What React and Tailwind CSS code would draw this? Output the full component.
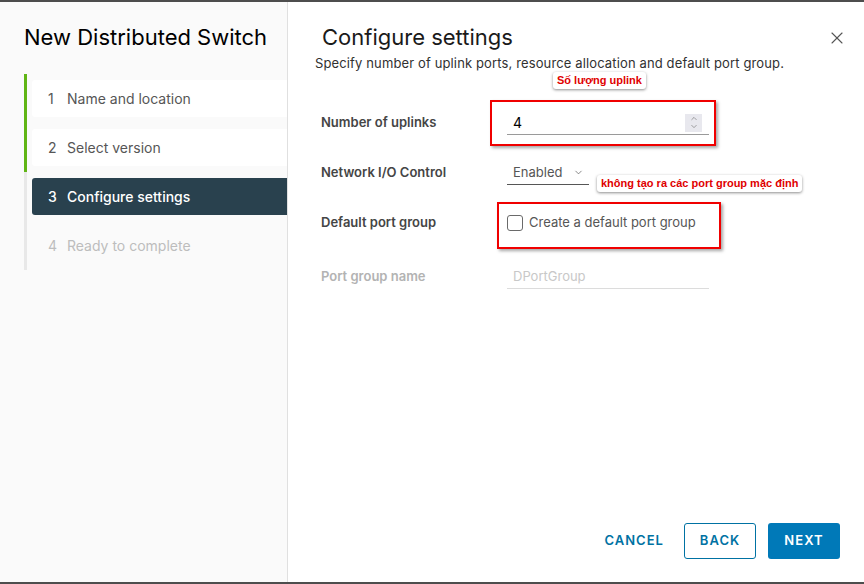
import { ChevronDown, ChevronUp, X } from "lucide-react";

const steps = [
  { n: 1, label: "Name and location", state: "done" },
  { n: 2, label: "Select version", state: "done" },
  { n: 3, label: "Configure settings", state: "active" },
  { n: 4, label: "Ready to complete", state: "todo" },
];

function Step({ step }) {
  const bar = step.state === "done" ? "border-[#60b515]" : "border-[#e8e8e8]";
  const box =
    step.state === "active"
      ? "bg-[#29414e] text-white font-medium"
      : step.state === "done"
      ? "bg-white text-[#565656]"
      : "text-[#bdbdbd]";
  return (
    <div className={`h-[49px] border-l-[3px] ${bar} pl-[5px] py-[6px]`}>
      <div className={`h-[37px] flex items-center pl-4 rounded-l-[3px] text-[14px] ${box}`}>
        <span className="w-[19px]">{step.n}</span>
        <span>{step.label}</span>
      </div>
    </div>
  );
}

function Note({ children, className }) {
  return (
    <div
      className={`absolute px-1 h-[17px] flex items-center rounded-[3px] bg-white text-[11px] font-bold text-[#e00000] shadow-[0_1px_3px_rgba(0,0,0,0.45)] ${className}`}
      style={{ fontFamily: '"Liberation Sans", Arial, sans-serif', textShadow: "0 0 2px #fff" }}
    >
      {children}
    </div>
  );
}

export default function App() {
  return (
    <div
      className="w-[864px] h-[584px] flex border-t-2 border-b-2 border-[#4d4d4d] bg-white text-[#333]"
      style={{ fontFamily: 'Inter, "Liberation Sans", Arial, sans-serif' }}
    >
      <aside className="w-[288px] shrink-0 bg-[#fafafa] border-r border-[#e0e0e0] pl-6">
        <h1 className="text-[22px] leading-[28px] text-black mt-[21px]">New Distributed Switch</h1>
        <div className="mt-[23px]">
          {steps.map((s) => (
            <Step key={s.n} step={s} />
          ))}
        </div>
      </aside>

      <main className="relative flex-1 flex flex-col">
        <div className="flex items-start justify-between pl-[34px] pr-[17px] pt-[21px]">
          <h2 className="text-[22px] leading-[28px] text-[#1a1a1a]">Configure settings</h2>
          <X className="w-[20px] h-[20px] mt-[5px] text-[#555]" strokeWidth={1.3} />
        </div>
        <p className="pl-[27px] mt-[3px] text-[13px] leading-[18px] tracking-[0.01em] text-[#313131]">
          Specify number of uplink ports, resource allocation and default port group.
        </p>

        <div className="pl-[33px] mt-[26px] text-[13px]">
          <div className="flex items-center h-[50px]">
            <label className="w-[186px] font-semibold text-[#454545]">Number of uplinks</label>
            <div className="w-[202px] h-[24px] flex items-center justify-between border-b border-[#9a9a9a] pl-[6px] pr-[7px]">
              <span className="text-[14px] text-black">4</span>
              <div className="w-[17px] h-[18px] bg-[#e8e8ee] flex flex-col items-center justify-center text-[#777]">
                <ChevronUp className="w-[12px] h-[9px] -mb-[1px]" strokeWidth={1.8} />
                <ChevronDown className="w-[12px] h-[9px]" strokeWidth={1.8} />
              </div>
            </div>
          </div>

          <div className="flex items-center h-[50px]">
            <label className="w-[186px] font-semibold text-[#454545]">Network I/O Control</label>
            <div className="w-[82px] h-[24px] flex items-center border-b border-[#565656] pl-[6px] gap-[11px] text-[#565656]">
              <span>Enabled</span>
              <ChevronDown className="w-[11px] h-[11px]" strokeWidth={1.5} />
            </div>
          </div>

          <div className="flex items-center h-[50px]">
            <label className="w-[186px] font-semibold text-[#454545]">Default port group</label>
            <div className="flex items-center gap-[6px] text-[#565656]">
              <span className="w-[16px] h-[16px] border border-[#6a6a6a] rounded-[3px] bg-white" />
              <span>Create a default port group</span>
            </div>
          </div>

          <div className="flex items-center h-[57px]">
            <label className="w-[186px] font-semibold text-[#b3b3b3]">Port group name</label>
            <div className="w-[202px] h-[24px] flex items-center border-b border-[#dcdcdc] pl-[6px] mt-[1px] text-[#c8c8c8]">
              DPortGroup
            </div>
          </div>
        </div>

        <div className="mt-auto flex items-center justify-end gap-3 pr-6 pb-[23px] text-[13px] font-semibold tracking-[0.08em]">
          <button className="h-[36px] pl-2 pr-[8px] text-[#0072a3]">CANCEL</button>
          <button className="h-[36px] w-[72px] border border-[#0072a3] rounded-[3px] text-[#0072a3]">BACK</button>
          <button className="h-[36px] w-[72px] bg-[#0079b8] rounded-[3px] text-white">NEXT</button>
        </div>

        <div className="absolute left-[202px] top-[98px] w-[226px] h-[46px] border-2 border-[#f00000] shadow-[2px_2px_3px_rgba(0,0,0,0.35)]" />
        <div className="absolute left-[209px] top-[200px] w-[224px] h-[47px] border-2 border-[#f00000] shadow-[2px_2px_3px_rgba(0,0,0,0.35)]" />
        <Note className="left-[265px] top-[70px]">Số lượng uplink</Note>
        <Note className="left-[309px] top-[173px]">không tạo ra các port group mặc định</Note>
      </main>
    </div>
  );
}
